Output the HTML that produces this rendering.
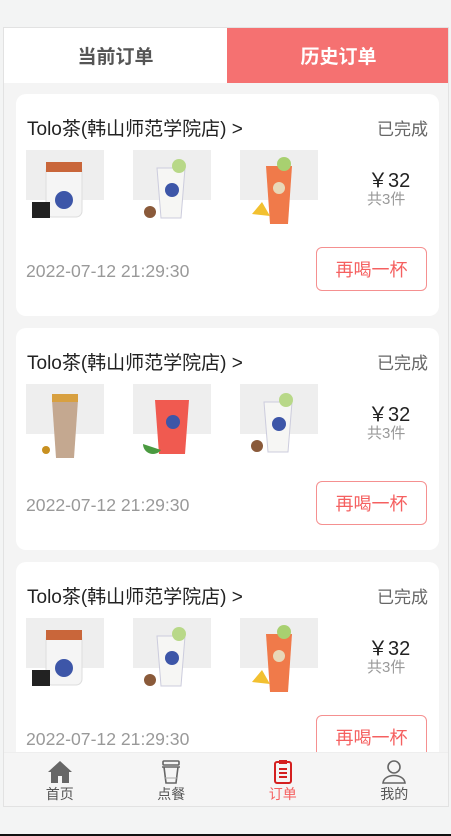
<!DOCTYPE html><html><head><meta charset="utf-8"><style>
*{margin:0;padding:0;box-sizing:border-box}
body{width:451px;height:836px;background:#f3f4f4;font-family:"Liberation Sans","Noto Sans CJK SC",sans-serif;position:relative;overflow:hidden}
.frame{position:absolute;left:3px;top:27px;width:446px;height:780px;background:#f4f4f4;border:1px solid #e2e2e2;overflow:hidden}
.tabs{position:absolute;left:0;top:0;width:446px;height:55px;display:flex}
.tab{flex:1;display:flex;align-items:center;justify-content:center;font-size:19px;font-weight:bold;color:#555;background:#fff}
.tab.on{background:#f57171;color:#fff}
.card{position:absolute;left:12px;width:423px;height:222px;background:#fff;border-radius:10px}
.title{position:absolute;left:11px;top:20px;font-size:19px;color:#222}
.st{position:absolute;right:11px;top:21px;font-size:17px;color:#666}
.img{position:absolute;top:56px;width:78px;height:76px}
.img .bg{position:absolute;left:0;top:0;width:78px;height:50px;background:#eee}
.price{position:absolute;left:352px;top:70px;font-size:20px;color:#222}
.cnt{position:absolute;left:351px;top:94px;font-size:15px;color:#999}
.date{position:absolute;left:10px;top:167px;font-size:17.6px;color:#999}
.btn{position:absolute;left:300px;top:153px;width:111px;height:44px;border:1px solid #f59090;border-radius:6px;color:#f56060;font-size:18px;display:flex;align-items:center;justify-content:center}
.nav{position:absolute;left:0;top:724px;width:446px;height:55px;background:#f5f5f5;border-top:1px solid #eee;display:flex}
.ni{flex:1;display:flex;flex-direction:column;align-items:center;padding-top:7px;font-size:14px;color:#555}
.ni svg{width:26px;height:24px}
.ni.on{color:#f56060}
.blk{position:absolute;left:0;top:834px;width:451px;height:2px;background:#111}
</style></head><body>
<div class="frame">
<div class="tabs"><div class="tab">当前订单</div><div class="tab on">历史订单</div></div>

<div class="card" style="top:66px">
<div class="title">Tolo茶(韩山师范学院店) &gt;</div><div class="st">已完成</div>
<div class="img" style="left:10px"><div class="bg"></div><svg width="78" height="76" style="position:absolute"><rect x="20" y="15" width="36" height="52" rx="6" fill="#f5f5f5" stroke="#ddd"/><rect x="20" y="12" width="36" height="10" fill="#c9663a"/><circle cx="38" cy="50" r="9" fill="#3d56a8"/><rect x="6" y="52" width="18" height="16" fill="#222"/></svg></div>
<div class="img" style="left:117px"><div class="bg"></div><svg width="78" height="76" style="position:absolute"><path d="M24 18 L52 18 L48 68 L28 68Z" fill="#f6f6f4" stroke="#ccd"/><circle cx="46" cy="16" r="7" fill="#b8d888"/><circle cx="39" cy="40" r="7" fill="#3d56a8"/><circle cx="17" cy="62" r="6" fill="#8a5a3a"/></svg></div>
<div class="img" style="left:224px"><div class="bg"></div><svg width="78" height="76" style="position:absolute"><path d="M26 16 L52 16 L48 74 L30 74Z" fill="#f07a4a"/><circle cx="44" cy="14" r="7" fill="#a8d070"/><circle cx="39" cy="38" r="6" fill="#e8d8b8"/><path d="M12 64 L22 52 L30 66Z" fill="#f2c030"/></svg></div>
<div class="price">￥32</div><div class="cnt">共3件</div>
<div class="date">2022-07-12 21:29:30</div><div class="btn">再喝一杯</div>
</div>

<div class="card" style="top:300px">
<div class="title">Tolo茶(韩山师范学院店) &gt;</div><div class="st">已完成</div>
<div class="img" style="left:10px"><div class="bg"></div><svg width="78" height="76" style="position:absolute"><path d="M26 16 L52 16 L48 74 L30 74Z" fill="#c4a890"/><rect x="26" y="10" width="26" height="8" fill="#d8a040"/><circle cx="20" cy="66" r="4" fill="#c89020"/></svg></div>
<div class="img" style="left:117px"><div class="bg"></div><svg width="78" height="76" style="position:absolute"><path d="M22 16 L56 16 L52 70 L26 70Z" fill="#f05a50"/><circle cx="40" cy="38" r="7" fill="#3d56a8"/><path d="M10 60 A10 10 0 0 0 28 66Z" fill="#4a9a40"/></svg></div>
<div class="img" style="left:224px"><div class="bg"></div><svg width="78" height="76" style="position:absolute"><path d="M24 18 L52 18 L48 68 L28 68Z" fill="#f6f6f4" stroke="#ccd"/><circle cx="46" cy="16" r="7" fill="#b8d888"/><circle cx="39" cy="40" r="7" fill="#3d56a8"/><circle cx="17" cy="62" r="6" fill="#8a5a3a"/></svg></div>
<div class="price">￥32</div><div class="cnt">共3件</div>
<div class="date">2022-07-12 21:29:30</div><div class="btn">再喝一杯</div>
</div>

<div class="card" style="top:534px">
<div class="title">Tolo茶(韩山师范学院店) &gt;</div><div class="st">已完成</div>
<div class="img" style="left:10px"><div class="bg"></div><svg width="78" height="76" style="position:absolute"><rect x="20" y="15" width="36" height="52" rx="6" fill="#f5f5f5" stroke="#ddd"/><rect x="20" y="12" width="36" height="10" fill="#c9663a"/><circle cx="38" cy="50" r="9" fill="#3d56a8"/><rect x="6" y="52" width="18" height="16" fill="#222"/></svg></div>
<div class="img" style="left:117px"><div class="bg"></div><svg width="78" height="76" style="position:absolute"><path d="M24 18 L52 18 L48 68 L28 68Z" fill="#f6f6f4" stroke="#ccd"/><circle cx="46" cy="16" r="7" fill="#b8d888"/><circle cx="39" cy="40" r="7" fill="#3d56a8"/><circle cx="17" cy="62" r="6" fill="#8a5a3a"/></svg></div>
<div class="img" style="left:224px"><div class="bg"></div><svg width="78" height="76" style="position:absolute"><path d="M26 16 L52 16 L48 74 L30 74Z" fill="#f07a4a"/><circle cx="44" cy="14" r="7" fill="#a8d070"/><circle cx="39" cy="38" r="6" fill="#e8d8b8"/><path d="M12 64 L22 52 L30 66Z" fill="#f2c030"/></svg></div>
<div class="price">￥32</div><div class="cnt">共3件</div>
<div class="date">2022-07-12 21:29:30</div><div class="btn">再喝一杯</div>
</div>

<div class="nav">
<div class="ni"><svg viewBox="0 0 26 24"><path d="M13 1 L25 12 L22 12 L22 23 L4 23 L4 12 L1 12Z" fill="#666"/><rect x="11" y="16" width="4" height="7" fill="#f5f5f5"/></svg>首页</div>
<div class="ni"><svg viewBox="0 0 26 24"><rect x="5" y="1" width="16" height="4" rx="1" fill="none" stroke="#666" stroke-width="1.6"/><path d="M4 7 L22 7 M6 7 L8 23 L18 23 L20 7" fill="none" stroke="#666" stroke-width="1.6"/><path d="M7 18 L19 18" stroke="#aaa"/></svg>点餐</div>
<div class="ni on"><svg viewBox="0 0 26 24"><rect x="5" y="2" width="16" height="21" rx="2" fill="none" stroke="#d42020" stroke-width="2"/><rect x="9" y="0" width="8" height="4" fill="#d42020"/><path d="M9 9 H17 M9 13 H17 M9 17 H17" stroke="#d42020" stroke-width="2"/></svg>订单</div>
<div class="ni"><svg viewBox="0 0 26 24"><circle cx="13" cy="7" r="6" fill="none" stroke="#666" stroke-width="1.6"/><path d="M2 23 C3 13 23 13 24 23Z" fill="none" stroke="#666" stroke-width="1.6"/></svg>我的</div>
</div>
</div>
<div class="blk"></div>
</body></html>
